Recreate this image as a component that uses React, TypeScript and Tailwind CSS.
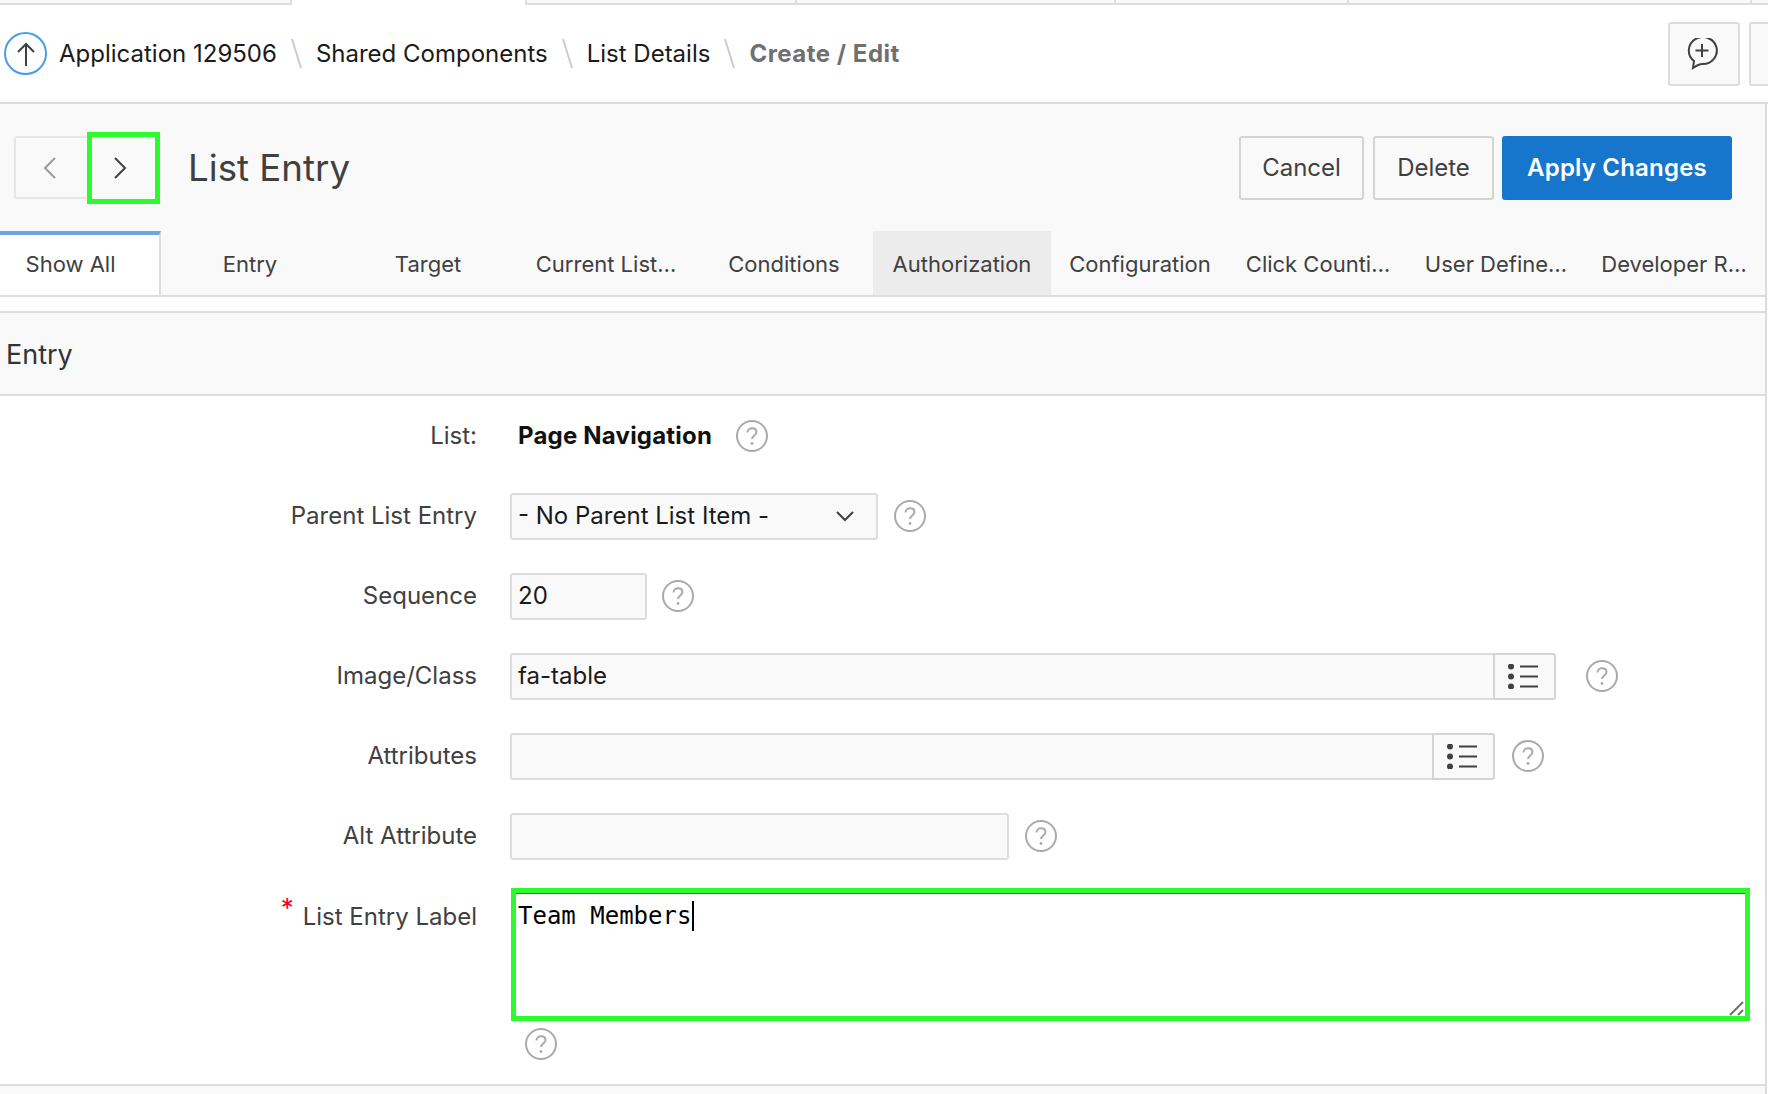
const tabs = [
  "Entry",
  "Target",
  "Current List…",
  "Conditions",
  "Authorization",
  "Configuration",
  "Click Counti…",
  "User Define…",
  "Developer R…",
];

const HelpIcon = () => (
  <svg width="32" height="32" viewBox="0 0 32 32" fill="none" className="shrink-0">
    <circle cx="16" cy="16" r="15" stroke="#aaaaaa" strokeWidth="2" />
    <path
      d="M11.5 12.5c0-2.6 2-4.3 4.6-4.3s4.4 1.600 4.400 3.900c0 3.400-4.500 3.500-4.500 7"
      stroke="#aaaaaa"
      strokeWidth="2"
    />
    <circle cx="16" cy="23.500" r="1.400" fill="#aaaaaa" />
  </svg>
);

const ListIcon = () => (
  <svg width="30" height="25" viewBox="0 0 30 25" fill="#404040">
    <circle cx="3" cy="2.500" r="3" />
    <circle cx="3" cy="12.500" r="3" />
    <circle cx="3" cy="22.500" r="3" />
    <rect x="12" y="1.500" width="18" height="2" />
    <rect x="12" y="11.500" width="18" height="2" />
    <rect x="12" y="21.500" width="18" height="2" />
  </svg>
);

const Crumb = ({ children, last }: { children: string; last?: boolean }) => (
  <>
    <span
      className={
        last
          ? "text-[24px] font-bold tracking-[0.5px] text-[#707070]"
          : "text-[24px] text-[#1a1a1a]"
      }
    >
      {children}
    </span>
    {!last && (
      <svg width="11" height="29" viewBox="0 0 11 29" className="mx-[14px] shrink-0">
        <path d="M1 0l9 29" stroke="#cccccc" strokeWidth="2" />
      </svg>
    )}
  </>
);

const Row = ({ label, children }: { label: string; children: React.ReactNode }) => (
  <div className="flex h-[80px] items-center">
    <div className="w-[477px] shrink-0 text-right text-[24px] text-[#404040]">{label}</div>
    <div className="ml-[33px] flex flex-1 items-center">{children}</div>
  </div>
);

const fieldClass =
  "flex h-[47px] items-center rounded-[3px] border-2 border-[#dddddd] bg-[#f9f9f9] px-[6px] text-[24px] text-[#1a1a1a]";

const PickerField = ({ value, width, helpGap }: { value?: string; width: string; helpGap: string }) => (
  <>
    <div className={`${width} ${fieldClass} rounded-r-none border-r-0`}>{value}</div>
    <div className="flex h-[47px] w-[63px] items-center justify-center rounded-r-[3px] border-2 border-[#d4d4d4] bg-[#f9f9f9] pr-[4px]">
      <ListIcon />
    </div>
    <div className={helpGap}>
      <HelpIcon />
    </div>
  </>
);

export default function App() {
  return (
    <div className="h-[1094px] w-[1768px] overflow-hidden bg-white font-['Inter','Liberation_Sans',sans-serif]">
      {/* Top tab strip */}
      <div className="flex h-[5px]">
        <div className="w-[292px] border-r-2 border-b-2 border-[#dddddd] bg-[#f9f9f9]" />
        <div className="w-[233px] bg-white" />
        <div className="w-[270px] border-b-2 border-l-2 border-[#dddddd] bg-[#f9f9f9]" />
        <div className="w-[319px] border-b-2 border-l-2 border-[#dddddd] bg-[#f9f9f9]" />
        <div className="w-[233px] border-b-2 border-l-2 border-[#dddddd] bg-[#f9f9f9]" />
        <div className="w-[403px] border-b-2 border-l-2 border-[#dddddd] bg-[#f9f9f9]" />
        <div className="flex-1 border-b-2 border-l-2 border-[#dddddd] bg-[#f9f9f9]" />
      </div>

      {/* Breadcrumb */}
      <div className="flex h-[99px] items-center border-b-2 border-[#dddddd] pl-1">
        <div className="flex h-[43px] w-[43px] shrink-0 items-center justify-center rounded-full border-2 border-[#4c9ce2]">
          <svg width="20" height="24" viewBox="0 0 20 24" fill="none" stroke="#404040" strokeWidth="2">
            <path d="M10 24V2M2 10l8-8 8 8" />
          </svg>
        </div>
        <div className="ml-[12px] flex items-center">
          <Crumb>Application 129506</Crumb>
          <Crumb>Shared Components</Crumb>
          <Crumb>List Details</Crumb>
          <Crumb last>Create / Edit</Crumb>
        </div>
        <div className="ml-auto flex h-[64px] w-[72px] items-center justify-center rounded-[3px] border-2 border-[#dddddd] bg-[#f9f9f9] pr-[5px]">
          <svg width="32" height="32" viewBox="0 0 32 32" fill="none" stroke="#404040" strokeWidth="2">
            <path d="M7 30l1-7A14 13.500 0 1 1 16 26c-3 0-6 2-9 4z" />
            <path d="M16 6v13M9.500 12.500h13" />
          </svg>
        </div>
        <div className="ml-[9px] h-[64px] w-[19px] shrink-0 rounded-l-[3px] border-2 border-r-0 border-[#dddddd] bg-[#f9f9f9]" />
      </div>

      {/* Main panel */}
      <div className="mr-[1px] border-r-2 border-[#dddddd]">
        <div className="bg-[#f9f9f9]">
          <div className="flex h-[127px] items-center pr-[33px] pl-[14px]">
            <div className="flex h-[63px]">
              <div className="flex w-[73px] items-center justify-center rounded-l-[3px] border-2 border-r-0 border-[#e6e6e6] pr-[4px]">
                <svg width="14" height="24" viewBox="0 0 14 24" fill="none" stroke="#9a9a9a" strokeWidth="2">
                  <path d="M12 2L2 12l10 10" />
                </svg>
              </div>
              <div className="-mt-[4px] -mb-[5px] flex w-[73px] items-center justify-center border-[5px] border-[#2cfb2e] pr-[8px]">
                <svg width="14" height="24" viewBox="0 0 14 24" fill="none" stroke="#404040" strokeWidth="2">
                  <path d="M2 2l10 10L2 22" />
                </svg>
              </div>
            </div>
            <h1 className="ml-[28px] text-[36.700px] font-normal text-[#404040]">List Entry</h1>
            <div className="ml-auto flex text-[24px]">
              <button className="h-[64px] w-[125px] rounded-[3px] border-2 border-[#d4d4d4] text-[#404040]">Cancel</button>
              <button className="ml-[9px] h-[64px] w-[121px] rounded-[3px] border-2 border-[#d4d4d4] text-[#404040]">Delete</button>
              <button className="ml-[8px] h-[64px] w-[230px] rounded-[3px] bg-[#1676cc] font-semibold tracking-[0.2px] text-white">
                Apply Changes
              </button>
            </div>
          </div>

          {/* Tabs */}
          <div className="flex h-[66px] overflow-hidden border-b-2 border-[#dddddd] text-[22px] text-[#404040]">
            <div className="-mb-[2px] flex w-[161px] shrink-0 items-center justify-center border-t-4 border-r-2 border-t-[#6ca5e0] border-r-[#dddddd] bg-white pr-[18px] pb-[4px]">
              Show All
            </div>
            {tabs.map((t) => (
              <div
                key={t}
                className={
                  t === "Authorization"
                    ? "flex w-[178px] shrink-0 items-center justify-center bg-[#ececec] pt-[2px]"
                    : "flex w-[178px] shrink-0 items-center justify-center pt-[2px]"
                }
              >
                {t}
              </div>
            ))}
          </div>
        </div>

        <div className="h-[16px] border-b-2 border-[#dddddd]" />

        {/* Entry region */}
        <div className="flex h-[83px] items-center border-b-2 border-[#dddddd] bg-[#f9f9f9] pt-[3px] pl-[6px] text-[27px] text-[#333333]">
          Entry
        </div>

        <div className="h-[690px] border-b-2 border-[#dddddd]">
          <Row label="List:">
            <span className="ml-[8px] text-[24px] font-bold tracking-[0.2px] text-[#111111]">Page Navigation</span>
            <span className="ml-[24px]">
              <HelpIcon />
            </span>
          </Row>
          <Row label="Parent List Entry">
            <div className={`${fieldClass} w-[368px] justify-between`}>
              - No Parent List Item -
              <svg width="20" height="12" viewBox="0 0 20 12" fill="none" stroke="#404040" strokeWidth="2" className="mr-[15px]">
                <path d="M2 2l8 8 8-8" />
              </svg>
            </div>
            <span className="ml-[16px]">
              <HelpIcon />
            </span>
          </Row>
          <Row label="Sequence">
            <div className={`${fieldClass} w-[137px]`}>20</div>
            <span className="ml-[15px]">
              <HelpIcon />
            </span>
          </Row>
          <Row label="Image/Class">
            <PickerField value="fa-table" width="w-[983px]" helpGap="ml-[30px]" />
          </Row>
          <Row label="Attributes">
            <PickerField width="w-[922px]" helpGap="ml-[17px]" />
          </Row>
          <Row label="Alt Attribute">
            <div className={`${fieldClass} w-[499px]`} />
            <span className="ml-[16px]">
              <HelpIcon />
            </span>
          </Row>

          {/* Label textarea */}
          <div className="flex pt-[12px]">
            <div className="w-[477px] shrink-0 pt-[7px] text-right text-[24px] text-[#404040]">
              <span className="mr-[9px] align-[8px] text-[26px] leading-none text-[#f5002d]">*</span>
              List Entry Label
            </div>
            <div className="ml-[34px] flex-1 pr-[15px]">
              <div className="relative h-[133px] border-[5px] border-[#2cfb2e]">
                <div className="h-full border-t border-[#1676cc] pt-[7px] pl-[2px] font-['DejaVu_Sans_Mono',monospace] text-[24px] leading-[30px] text-black">
                  Team Members
                  <span className="ml-[1px] inline-block h-[30px] w-[2px] bg-black align-top" />
                </div>
                <svg width="16" height="16" viewBox="0 0 16 16" stroke="#707070" strokeWidth="2" className="absolute right-0 bottom-0">
                  <path d="M1 15L14 2M9 15l5-5" />
                </svg>
              </div>
              <div className="mt-[7px] ml-[14px]">
                <HelpIcon />
              </div>
            </div>
          </div>
        </div>
        <div className="h-[8px] bg-[#f9f9f9]" />
      </div>
    </div>
  );
}
